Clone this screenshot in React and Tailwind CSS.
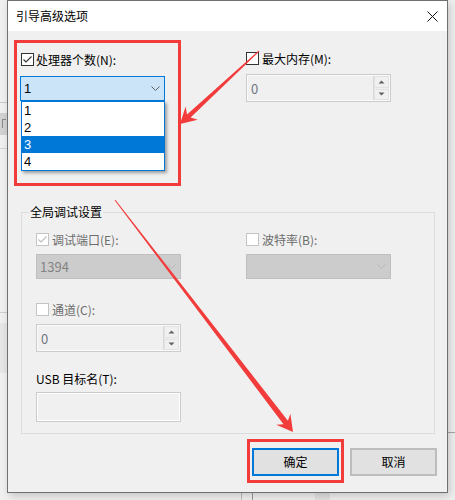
import React from "react";

const RED = "#f23c3c";

function Check({ checked = false, disabled = false }) {
  return (
    <span
      className={`flex h-[13px] w-[13px] shrink-0 items-center justify-center border bg-white ${
        disabled ? "border-[#c4c4c4]" : "border-[#333333]"
      }`}
    >
      {checked && (
        <svg width="11" height="11" viewBox="0 0 11 11">
          <path
            d="M1.5 5.5 L4 8 L9.5 2.5"
            fill="none"
            stroke={disabled ? "#bcbcbc" : "#333333"}
            strokeWidth="1.1"
          />
        </svg>
      )}
    </span>
  );
}

function Chevron({ color }) {
  return (
    <svg width="9" height="5" viewBox="0 0 9 5">
      <path d="M0.5 0.5 L4.5 4.5 L8.5 0.5" fill="none" stroke={color} />
    </svg>
  );
}

function Tri({ up }) {
  return (
    <svg width="7" height="4" viewBox="0 0 7 4">
      <path d={up ? "M0.5 3.5 L3.5 0.5 L6.5 3.5 Z" : "M0.5 0.5 L3.5 3.5 L6.5 0.5 Z"} fill="#606060" />
    </svg>
  );
}

function SpinBox({ value }) {
  return (
    <div className="flex h-[28px] w-[145px] border border-[#cccccc] bg-[#f0f0f0] shadow-[inset_0_0_0_1px_#fafafa]">
      <div className="flex flex-1 items-center pl-[4px] text-[13px] text-[#6f7680]">{value}</div>
      <div className="my-px mr-px flex w-[16px] flex-col gap-px border-l border-[#d9d9d9]">
        <div className="flex flex-1 items-center justify-center border border-[#e2e2e2] bg-[#f0f0f0]">
          <Tri up />
        </div>
        <div className="flex flex-1 items-center justify-center border border-[#e2e2e2] bg-[#f0f0f0]">
          <Tri />
        </div>
      </div>
    </div>
  );
}

function Field({ label, checked, disabled, dark, gap = "gap-[2px]" }) {
  return (
    <div className={`flex h-[13px] items-center ${gap}`}>
      <Check checked={checked} disabled={disabled} />
      <span className={dark ? "text-black" : "text-[#6d6d6d]"}>{label}</span>
    </div>
  );
}

function BackWindow() {
  // bits of the window lying behind the dialog
  return (
    <>
      <div className="absolute left-0 top-[102px] h-px w-[7px] bg-[#c8c8c8]" />
      <div className="absolute left-0 top-[113px] h-[22px] w-[7px] bg-[#d2d2d2]" />
      <div className="absolute left-[2px] top-[119px] h-[9px] w-[4px] border-l border-t border-[#8a8a8a]" />
      <div className="absolute left-0 top-[148px] h-px w-[7px] bg-[#d4d4d4]" />
      <div className="absolute left-0 top-[312px] h-px w-[7px] bg-[#cfcfcf]" />
      <div className="absolute left-0 top-[323px] h-[50px] w-[7px] bg-[#e6e6e6]" />
      <div className="absolute left-[448px] top-[432px] h-px w-[7px] bg-[#a8a8a8]" />
      <div className="absolute left-[241px] top-[493px] h-[7px] w-px bg-[#bdbdbd]" />
      <div className="absolute left-[252px] top-[493px] h-[7px] w-px bg-[#9a9a9a]" />
      <div className="absolute left-[315px] top-[493px] h-[7px] w-[15px] bg-[#e2e2e2]" />
    </>
  );
}

function Annotations() {
  return (
    <svg className="pointer-events-none absolute left-0 top-0" width="455" height="500">
      <rect x="15.5" y="41.5" width="164" height="143" fill="none" stroke={RED} strokeWidth="3" />
      <rect x="248.5" y="440.5" width="94" height="41" fill="none" stroke={RED} strokeWidth="3" />
      <polygon
        points="258.7,50.6 187,114.6 185.6,106.6 180,124 197.8,119.8 190.6,117.4 259.3,51.4"
        fill={RED}
      />
      <polygon
        points="114.6,200.3 283.5,424.3 276.2,424.8 293,432 290.4,413.8 287.9,420.8 115.4,199.7"
        fill={RED}
      />
    </svg>
  );
}

export default function App() {
  return (
    <div className="relative h-[500px] w-[455px] overflow-hidden bg-[#f0f0f0] font-['Noto_Sans_CJK_SC',sans-serif] text-[12px] leading-none text-black">
      <BackWindow />

      <div className="relative ml-[7px] flex h-[493px] w-[441px] flex-col border border-[#707070] bg-[#f0f0f0] shadow-[2px_3px_8px_rgba(0,0,0,0.18)]">
        {/* title bar */}
        <div className="flex h-[30px] shrink-0 items-center justify-between bg-white pl-[8px] pr-[9px]">
          <span className="text-[12px]">引导高级选项</span>
          <svg width="11" height="11" viewBox="0 0 11 11">
            <path d="M0.5 0.5 L10.5 10.5 M10.5 0.5 L0.5 10.5" stroke="#111" strokeWidth="1" />
          </svg>
        </div>

        {/* processors / memory */}
        <div className="mt-[21px] flex pl-[12px]">
          <div className="flex w-[145px] flex-col">
            <div className="ml-px mt-px">
              <Field label="处理器个数(N):" checked dark />
            </div>
            <div className="relative mt-[10px]">
              <div className="flex h-[25px] items-center justify-between border border-[#0078d7] bg-[#cce4f7] pl-[3px] pr-[4px] font-['Liberation_Sans',sans-serif] text-[13px]">
                <span>1</span>
                <Chevron color="#606060" />
              </div>
              <ul className="absolute left-px top-full z-10 w-[144px] border border-[#0078d7] bg-white font-['Liberation_Sans',sans-serif] text-[13px] leading-[17px] shadow-[2px_2px_3px_rgba(0,0,0,0.35)]">
                {["1", "2", "3", "4"].map((n) => (
                  <li key={n} className={`h-[17px] pl-[2px] ${n === "3" ? "bg-[#0078d7] text-white" : ""}`}>
                    {n}
                  </li>
                ))}
              </ul>
            </div>
          </div>

          <div className="ml-[81px] flex w-[145px] flex-col">
            <Field label="最大内存(M):" dark gap="gap-[3px]" />
            <div className="mt-[9px]">
              <SpinBox value="0" />
            </div>
          </div>
        </div>

        {/* global debug settings */}
        <div className="relative ml-[13px] mt-[110px] h-[222px] w-[414px] border border-[#dcdcdc] pl-[14px] pt-[20px]">
          <span className="absolute -top-[7px] left-[7px] bg-[#f0f0f0] px-px">全局调试设置</span>

          <div className="flex">
            <div className="flex w-[145px] flex-col">
              <Field label="调试端口(E):" checked disabled gap="gap-[3px]" />
              <div className="mt-[8px] flex h-[25px] items-center justify-between border border-[#bfbfbf] bg-[#cccccc] pl-[3px] pr-[4px] text-[13px] text-[#838383]">
                <span>1394</span>
                <Chevron color="#b8b8b8" />
              </div>
            </div>
            <div className="ml-[65px] flex w-[145px] flex-col">
              <Field label="波特率(B):" disabled gap="gap-[3px]" />
              <div className="mt-[8px] flex h-[25px] items-center justify-end border border-[#bfbfbf] bg-[#cccccc] pr-[4px]">
                <Chevron color="#b8b8b8" />
              </div>
            </div>
          </div>

          <div className="mt-[24px] flex w-[145px] flex-col">
            <Field label="通道(C):" disabled gap="gap-[3px]" />
            <div className="mt-[8px]">
              <SpinBox value="0" />
            </div>
          </div>

          <div className="mt-[20px] flex h-[13px] items-center">USB 目标名(T):</div>
          <div className="mt-[7px] h-[30px] w-[145px] border border-[#cbcbcb] bg-[#f0f0f0] shadow-[inset_0_0_0_1px_#ffffff]" />
        </div>

        {/* buttons */}
        <div className="mt-[14px] flex justify-end gap-[11px] pr-[10px]">
          <button className="h-[28px] w-[87px] border-2 border-[#0078d7] bg-[#e1e1e1] text-[12px]">确定</button>
          <button className="h-[28px] w-[87px] border-2 border-[#bdbdbd] bg-[#e1e1e1] text-[12px]">取消</button>
        </div>
      </div>

      <Annotations />
    </div>
  );
}
